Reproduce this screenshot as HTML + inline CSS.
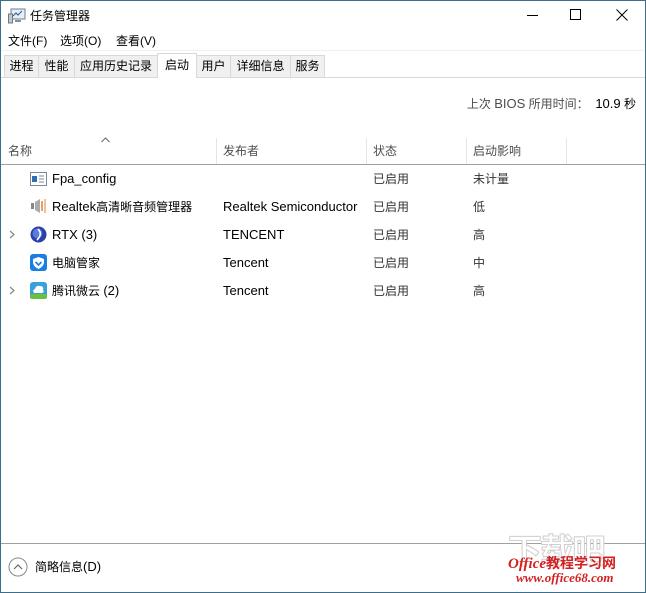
<!DOCTYPE html>
<html><head><meta charset="utf-8"><style>
*{margin:0;padding:0;box-sizing:border-box}
body{width:646px;height:593px;overflow:hidden;background:#fff;font-family:"Liberation Sans","Noto Sans CJK SC",sans-serif;font-size:12px;color:#000;position:relative}
.win{position:absolute;left:0;top:0;width:646px;height:593px;border:1px solid #3c6e8c}
.a{position:absolute;white-space:nowrap}
.tab{position:absolute;top:55px;height:22px;border:1px solid #d9d9d9;border-bottom:none;background:#f0f0f0;font-size:12px;line-height:21px;text-align:center}
.sep{position:absolute;top:138px;width:1px;height:26px;background:#e5e5e5}
.g{color:#333}
.h{color:#4d4d4d}
.l{font-size:13px}
</style></head><body>
<div class="win"></div>
<svg class="a" style="left:8px;top:8px" width="18" height="16" viewBox="0 0 18 16"><rect x="3" y="1" width="14" height="10" fill="#e8eef4" stroke="#6a7f93"/><polyline points="5,8 8,5 10,7 14,3" fill="none" stroke="#3a6a9a" stroke-width="1.2"/><rect x="0.5" y="6" width="4" height="9" fill="#c0c8d0" stroke="#707880"/><rect x="7" y="12" width="6" height="2" fill="#8090a0"/></svg>
<div class="a" style="left:30px;top:7px;font-size:12px;line-height:18px">任务管理器</div>
<div class="a" style="left:527px;top:15px;width:11px;height:1px;background:#000"></div>
<div class="a" style="left:570px;top:9px;width:11px;height:11px;border:1px solid #000"></div>
<svg class="a" style="left:616px;top:9px" width="12" height="12"><path d="M0.5 0.5L11.5 11.5M11.5 0.5L0.5 11.5" stroke="#000" stroke-width="1"/></svg>
<div class="a" style="left:8px;top:33px;line-height:16px">文件(F)</div>
<div class="a" style="left:60px;top:33px;line-height:16px">选项(O)</div>
<div class="a" style="left:116px;top:33px;line-height:16px">查看(V)</div>
<div class="a" style="left:1px;top:50px;width:644px;height:27px;background:#fff;border-top:1px solid #f0f0f0"></div>
<div class="a" style="left:1px;top:77px;width:644px;height:1px;background:#d9d9d9"></div>
<div class="tab" style="left:4px;width:35px">进程</div>
<div class="tab" style="left:38px;width:37px">性能</div>
<div class="tab" style="left:74px;width:84px">应用历史记录</div>
<div class="tab" style="left:157px;top:53px;height:25px;width:40px;background:#fff;line-height:22px">启动</div>
<div class="tab" style="left:196px;width:35px">用户</div>
<div class="tab" style="left:230px;width:61px">详细信息</div>
<div class="tab" style="left:290px;width:35px">服务</div>
<div class="a h" style="right:10px;top:96px;line-height:16px">上次 <span class="l">BIOS</span> 所用时间：&nbsp; <span class="l" style="color:#000">10.9</span> <span style="color:#000">秒</span></div>
<svg class="a" style="left:101px;top:137px" width="9" height="6"><path d="M0.5 5L4.5 1L8.5 5" fill="none" stroke="#666"/></svg>
<div class="a h" style="left:8px;top:143px;line-height:16px">名称</div>
<div class="a h" style="left:223px;top:143px;line-height:16px">发布者</div>
<div class="a h" style="left:373px;top:143px;line-height:16px">状态</div>
<div class="a h" style="left:473px;top:143px;line-height:16px">启动影响</div>
<div class="sep" style="left:216px"></div><div class="sep" style="left:366px"></div><div class="sep" style="left:466px"></div><div class="sep" style="left:566px"></div>
<div class="a" style="left:1px;top:164px;width:644px;height:1px;background:#a0a0a0"></div>
<svg class="a" style="left:30px;top:172px" width="17" height="14"><rect x="0.5" y="0.5" width="16" height="13" fill="#fff" stroke="#7a8896"/><rect x="2" y="4" width="5" height="6" fill="#2a6fb8"/><path d="M9 4h5M9 7h5M9 10h5" stroke="#7a8896"/></svg>
<div class="a l" style="left:52px;top:171px;line-height:16px">Fpa_config</div>
<svg class="a" style="left:30px;top:198px" width="18" height="16"><rect x="1" y="5" width="3" height="6" fill="#888"/><path d="M5 4L10 1V15L5 12Z" fill="#aaa"/><path d="M12 3v10" stroke="#e08030" stroke-width="1.5"/><path d="M15 1v14" stroke="#e8a060" stroke-width="1.3"/></svg>
<div class="a" style="left:52px;top:199px;line-height:16px"><span class="l">Realtek</span>高清晰音频管理器</div>
<div class="a l" style="left:223px;top:199px;line-height:16px">Realtek Semiconductor</div>
<svg class="a" style="left:9px;top:230px" width="7" height="9"><path d="M1 1L5 4.5L1 8" fill="none" stroke="#888" stroke-width="1.2"/></svg>
<svg class="a" style="left:30px;top:226px" width="17" height="17"><circle cx="8.5" cy="8.5" r="8" fill="#2a3fa8"/><circle cx="7.5" cy="7.5" r="5" fill="#5a7ae0"/><path d="M8 3Q13 8 7 14" fill="none" stroke="#fff" stroke-width="1.6"/></svg>
<div class="a l" style="left:52px;top:227px;line-height:16px">RTX (3)</div>
<div class="a l" style="left:223px;top:227px;line-height:16px">TENCENT</div>
<svg class="a" style="left:30px;top:254px" width="17" height="17"><rect width="17" height="17" rx="3" fill="#1a7fe0"/><path d="M8.5 3L14 5V9Q13 13 8.5 15Q4 13 3 9V5Z" fill="#fff"/><path d="M5.5 8L8.5 11L11.5 8" fill="none" stroke="#1a7fe0" stroke-width="1.6"/></svg>
<div class="a" style="left:52px;top:255px;line-height:16px">电脑管家</div>
<div class="a l" style="left:223px;top:255px;line-height:16px">Tencent</div>
<svg class="a" style="left:9px;top:286px" width="7" height="9"><path d="M1 1L5 4.5L1 8" fill="none" stroke="#888" stroke-width="1.2"/></svg>
<svg class="a" style="left:30px;top:282px" width="17" height="17"><rect width="17" height="17" rx="3" fill="#3aa0d8"/><rect y="12" width="17" height="5" rx="2" fill="#6ac040"/><path d="M4 11Q2 8 5 7Q6 3 10 4Q14 4 13 8Q15 10 12 11Z" fill="#fff"/></svg>
<div class="a" style="left:52px;top:283px;line-height:16px">腾讯微云 <span class="l">(2)</span></div>
<div class="a l" style="left:223px;top:283px;line-height:16px">Tencent</div>
<div class="a g" style="left:373px;top:171px;line-height:16px">已启用</div>
<div class="a g" style="left:373px;top:199px;line-height:16px">已启用</div>
<div class="a g" style="left:373px;top:227px;line-height:16px">已启用</div>
<div class="a g" style="left:373px;top:255px;line-height:16px">已启用</div>
<div class="a g" style="left:373px;top:283px;line-height:16px">已启用</div>
<div class="a g" style="left:473px;top:171px;line-height:16px">未计量</div>
<div class="a g" style="left:473px;top:199px;line-height:16px">低</div>
<div class="a g" style="left:473px;top:227px;line-height:16px">高</div>
<div class="a g" style="left:473px;top:255px;line-height:16px">中</div>
<div class="a g" style="left:473px;top:283px;line-height:16px">高</div>
<div class="a" style="left:1px;top:543px;width:644px;height:1px;background:#a0a0a0"></div>
<svg class="a" style="left:8px;top:557px" width="20" height="20"><circle cx="10" cy="10" r="9" fill="none" stroke="#888"/><path d="M6 12L10 8L14 12" fill="none" stroke="#666" stroke-width="1.2"/></svg>
<div class="a" style="left:35px;top:559px;line-height:16px">简略信息<span class="l">(D)</span></div>
<div class="a" style="left:508px;top:524px;font-size:34px;font-weight:bold;color:#fff;-webkit-text-stroke:1px #cfcfcf;letter-spacing:-2px">下载吧</div>
<div class="a" style="left:508px;top:553px;font-family:'Liberation Serif',serif;font-style:italic;font-weight:bold;font-size:15px;color:#d42020">Office<span style="font-style:normal;font-family:'Noto Sans CJK SC',sans-serif;font-size:14px">教程学习网</span></div>
<div class="a" style="left:516px;top:570px;font-family:'Liberation Serif',serif;font-style:italic;font-weight:bold;font-size:13px;color:#d42020">www.office68.com</div>
</body></html>
